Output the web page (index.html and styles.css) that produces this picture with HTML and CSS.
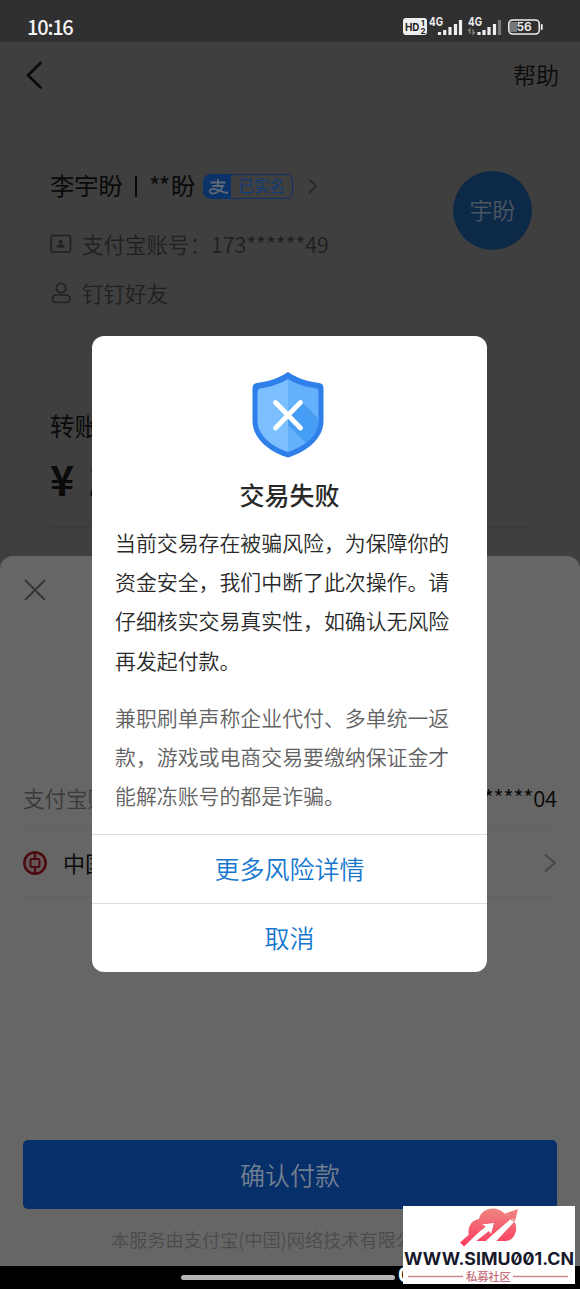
FILE: index.html
```html
<!DOCTYPE html>
<html lang="zh-CN">
<head>
<meta charset="utf-8">
<title>交易失败</title>
<link rel="stylesheet" href="styles.css">
</head>
<body>
<div class="screen">
  <header class="status">
    <span class="clock">10:16</span>
    <svg class="indicators" width="142" height="24" viewBox="0 0 142 24">
      <rect x="0" y="3" width="24" height="17" rx="3" fill="#eee"/>
      <g font-family="Inter, sans-serif" font-weight="700">
        <text x="2" y="15.500" font-size="11" textLength="14.500" lengthAdjust="spacingAndGlyphs" fill="#222">HD</text>
        <text x="18" y="10.800" font-size="8" fill="#222">1</text>
        <text x="17.500" y="18.800" font-size="8" fill="#222">2</text>
        <text x="26" y="11" font-size="12" textLength="14" lengthAdjust="spacingAndGlyphs" fill="#eee">4G</text>
        <text x="65" y="11" font-size="12" textLength="14" lengthAdjust="spacingAndGlyphs" fill="#eee">4G</text>
      </g>
      <g stroke="#eee" stroke-width="3.200">
        <path d="M36.500 20v-3M41.700 20v-5M47 20v-8M52.500 20v-11M57.500 20v-15"/>
        <path d="M76 20v-3M81 20v-5M86 20v-8M91.500 20v-11"/>
        <path d="M96.500 20v-15" stroke="#777"/>
      </g>
      <path d="M67 19v-5l-2 2M70 14v5l2-2" fill="none" stroke="#888" stroke-width="1.200"/>
      <rect x="107" y="7" width="7" height="10" fill="#777"/>
      <rect x="105.800" y="5" width="30.500" height="14" rx="4" fill="none" stroke="#eee" stroke-width="1.600"/>
      <path d="M138.800 10v4" stroke="#eee" stroke-width="1.800" stroke-linecap="round"/>
      <text x="121" y="16.300" text-anchor="middle" font-family="Inter, sans-serif" font-size="12" font-weight="600" fill="#eee">56</text>
    </svg>
  </header>

  <main class="transfer">
    <div class="titlebar">
      <svg width="20" height="30" viewBox="0 0 20 30"><path d="M14.500 3L2 15.300L14.500 27.500" fill="none" stroke="#090909" stroke-width="2.600" stroke-linecap="round"/></svg>
      <span>帮助</span>
    </div>
    <section class="payee">
      <div class="details">
        <div class="name">
          <span>李宇盼</span><i class="bar"></i><span class="stars">**</span><span>盼</span>
          <span class="verified">
            <svg width="27" height="23" viewBox="0 0 27 23"><path d="M6.500 7.500H21.500M14 4V11M8.500 11H19C17 16 11 19 8 18.500C4 17.500 5.500 13.500 10 14C15 14.700 18 17.500 24 18" fill="none" stroke="#5f6874" stroke-width="1.800"/></svg>
            <b>已实名</b>
          </span>
          <svg class="chevron" width="12" height="18" viewBox="0 0 12 18"><path d="M2 2L9 9L2 16" fill="none" stroke="#242424" stroke-width="1.500"/></svg>
        </div>
        <div class="meta account">
          <svg width="22" height="20" viewBox="0 0 22 20"><rect x="1" y="1.500" width="19.500" height="16.500" rx="2" fill="none" stroke="#202123" stroke-width="1.700"/><circle cx="10.700" cy="7.700" r="2" fill="#202123"/><path d="M6.500 13.500q.5-3.500 4.200-3.500t4.200 3.500z" fill="#202123"/></svg>
          <span>支付宝账号：<span class="number">173******49</span></span>
        </div>
        <div class="meta friend">
          <svg width="22" height="22" viewBox="0 0 22 22"><circle cx="11" cy="6" r="4.700" fill="none" stroke="#202123" stroke-width="1.700"/><rect x="2.500" y="13" width="17.500" height="7.500" rx="3.750" fill="none" stroke="#202123" stroke-width="1.700"/></svg>
          <span>钉钉好友</span>
        </div>
      </div>
      <div class="avatar">宇盼</div>
    </section>
    <section class="amount">
      <div class="amount-label">转账</div>
      <div class="amount-value">¥<span>1</span></div>
    </section>
  </main>

  <section class="sheet">
    <svg class="close" width="24" height="24" viewBox="0 0 24 24"><path d="M2 2L22 22M22 2L2 22" stroke="#343434" stroke-width="1.800"/></svg>
    <div class="row login"><span class="muted">支付宝账</span><span class="number">*****04</span></div>
    <div class="row bank">
      <svg width="26" height="26" viewBox="0 0 26 26"><g fill="none" stroke="#4a0a10"><circle cx="13" cy="13" r="10.700" fill="#66575a" stroke-width="2.500"/><rect x="8.500" y="9" width="9" height="8" rx="1.500" stroke-width="2"/><path d="M13 2V9M13 17V24" stroke-width="2.200"/></g></svg>
      <span class="bank-name">中国</span>
      <svg class="go" width="14" height="22" viewBox="0 0 14 22"><path d="M2 2.500L12 11L2 19.500" fill="none" stroke="#454545" stroke-width="1.800"/></svg>
    </div>
    <div class="pay">确认付款</div>
    <div class="legal">本服务由支付宝(中国)网络技术有限公</div>
  </section>

  <footer class="nav"><i class="handle"></i><b class="digit">0</b></footer>

  <section class="dialog">
    <svg class="shield" width="74" height="88" viewBox="0 0 74 88">
      <path d="M37 1C28 7 18 10.500 6 12Q1.500 12.500 1.500 17V50C1.500 68 19 81 37 86.500C55 81 72.500 68 72.500 50V17Q72.500 12.500 68 12C56 10.500 46 7 37 1Z" fill="#2f7fea"/>
      <path d="M37 8C29 13 19 16 9 17.500Q6.500 18 6.500 21V50C6.500 64 21 76 37 81Z" fill="#7cbfff"/>
      <path d="M37 8C45 13 55 16 65 17.500Q67.500 18 67.500 21V50C67.500 64 53 76 37 81Z" fill="#65b0fb"/>
      <path d="M51 31L67.500 48V50C67.500 58 62 66 54.500 71.500L37 54V44Z" fill="#459df4"/>
      <path d="M24.500 31.500L49.500 57M49.500 31.500L24.500 57" stroke="#fff" stroke-width="4.800" stroke-linecap="round"/>
    </svg>
    <h1>交易失败</h1>
    <p class="message">当前交易存在被骗风险，为保障你的<br>资金安全，我们中断了此次操作。请<br>仔细核实交易真实性，如确认无风险<br>再发起付款。</p>
    <p class="message hint">兼职刷单声称企业代付、多单统一返<br>款，游戏或电商交易要缴纳保证金才<br>能解冻账号的都是诈骗。</p>
    <div class="action">更多风险详情</div>
    <div class="action">取消</div>
  </section>

  <svg class="watermark" width="172" height="78" viewBox="0 0 172 78">
    <defs><linearGradient id="cloud" gradientUnits="userSpaceOnUse" x1="0" y1="2" x2="0" y2="40"><stop offset="0" stop-color="#ee8783"/><stop offset="1" stop-color="#fb3a60"/></linearGradient></defs>
    <rect width="172" height="78" fill="#fff"/>
    <path d="M66 30C64 22 68 14 76 13C78 1 95-1 102 8C112 12 116 21 111 30Q108 35 102 35H73Z" fill="url(#cloud)"/>
    <path d="M66 34L83 20.500L79 18.500L91 17L88 28L86 25L72 36L62 42Z" fill="#fff"/>
    <path d="M57 36.500L66 28.500L73 23L76 26L61 40.500Z" fill="url(#cloud)"/>
    <path d="M81 36.500L107 13L111 16L92 36.500Z" fill="#fff"/>
    <path d="M92 18L105 9L101 8L115 3L112 15L109 12L90 28Z" fill="url(#cloud)"/>
    <text x="1" y="59" textLength="170" lengthAdjust="spacingAndGlyphs" class="url">WWW.SIMU001.CN</text>
    <path d="M5 70.500H60M110 70.500H165" stroke="#cd8790" stroke-width="1.300"/>
    <text x="63" y="74.500" textLength="45" class="community">私募社区</text>
  </svg>
</div>
</body>
</html>
```

FILE: styles.css
```css
* { box-sizing: border-box; }
body { margin: 0; background: #000; }
.screen {
  position: relative;
  width: 580px;
  height: 1289px;
  overflow: hidden;
  background: #3f3f3f;
  font-family: "Noto Sans CJK SC", sans-serif;
  font-weight: 350;
  color: #0a0a0a;
  white-space: nowrap;
}
.status {
  display: flex;
  justify-content: space-between;
  align-items: center;
  height: 42px;
  padding: 12px 35px 0 27px;
  background: #303030;
}
.clock { font: 500 20px/24px "Noto Sans CJK SC", sans-serif; letter-spacing: -1.200px; color: #f4f4f4; }
.titlebar {
  display: flex;
  justify-content: space-between;
  align-items: center;
  height: 66px;
  padding: 0 21px 0 26px;
  font-size: 23px;
}
.titlebar span { padding-bottom: 2px; }
.payee {
  display: flex;
  justify-content: space-between;
  height: 292px;
  padding: 60px 48px 0 50px;
}
.name { display: flex; align-items: center; height: 36px; font-size: 24.300px; font-weight: 400; }
.name > span:not(.verified) { padding-bottom: 3px; }
.bar { width: 2px; height: 21px; margin: 0 12px; background: #0a0a0a; }
.stars { letter-spacing: -1.500px; width: 22px; }
.verified {
  display: flex;
  width: 90px;
  height: 25px;
  margin-left: 8px;
  border: 1.500px solid #0c3369;
  border-radius: 7px;
  overflow: hidden;
}
.verified svg { background: #0c3369; flex: none; }
.verified b { flex: 1; text-align: center; font-size: 15.500px; line-height: 20px; font-weight: 400; color: #0c3c7b; }
.chevron { margin-left: 14px; }
.meta { display: flex; align-items: center; gap: 10px; font-size: 21.500px; color: #202020; }
.meta > span { padding-bottom: 2px; }
.account .number { letter-spacing: -0.050px; }
.account { height: 30px; margin-top: 25px; }
.friend { height: 30px; margin-top: 19px; }
.avatar {
  width: 79px;
  height: 79px;
  margin-top: 3px;
  border-radius: 50%;
  background: #0d2948;
  color: #4b5661;
  font-size: 23px;
  line-height: 77px;
  text-align: center;
}
.amount { margin: 0 52px 0 50px; height: 128px; border-bottom: 1px solid #393939; }
.amount-label { padding-top: 9px; font-size: 24.500px; line-height: 34px; font-weight: 400; }
.amount-value { display: flex; gap: 13px; font-size: 41px; line-height: 71px; font-weight: 700; }
.sheet {
  position: absolute;
  top: 556px;
  left: 0;
  width: 580px;
  height: 710px;
  padding: 22px 23px 0;
  border-radius: 13px 13px 0 0;
  background: #666;
}
.close { display: block; }
.row { display: flex; align-items: center; border-bottom: 1px solid #616161; }
.row span { padding-bottom: 2px; }
.login { justify-content: space-between; height: 65px; margin-top: 164px; font-size: 21.500px; }
.login .number { font-size: 22px; letter-spacing: -0.200px; }
.muted { color: #393939; }
.bank { height: 66px; font-size: 22px; }
.bank svg { margin-bottom: 2px; }
.bank svg:first-child { margin-left: -1px; }
.bank .bank-name { margin-left: 15px; padding-bottom: 4px; font-weight: 400; }
.go { margin-left: auto; }
.pay {
  height: 69px;
  margin-top: 243px;
  border-radius: 5px;
  background: #072f69;
  color: #727f90;
  font-size: 25px;
  line-height: 68px;
  text-align: center;
}
.legal { margin: 16px 0 0 88px; font-size: 18.200px; line-height: 28px; color: #4b4b4b; }
.nav {
  position: absolute;
  top: 1266px;
  left: 0;
  display: flex;
  width: 580px;
  height: 23px;
  padding-left: 181px;
  background: #000;
}
.handle { width: 214px; height: 5px; margin-top: 9px; border-radius: 3px; background: #b5b5b5; }
.digit { margin-left: 3px; font: 700 20px/18px Inter, sans-serif; color: #fff; }
.dialog {
  position: absolute;
  top: 336px;
  left: 92px;
  width: 395px;
  height: 636px;
  border-radius: 12px;
  background: #fff;
  overflow: hidden;
}
.shield { display: block; margin: 35px auto 0 159px; }
.dialog h1 { margin: 17px 0 0; font-size: 25px; line-height: 36px; font-weight: 500; text-align: center; color: #292929; }
.message { margin: 11px 0 0 23px; font-size: 20.900px; line-height: 39.200px; color: #292929; }
.hint { margin-top: 18px; color: #626262; }
.action {
  height: 69px;
  border-top: 1px solid #dedede;
  color: #1677cf;
  font-size: 25px;
  line-height: 67px;
  text-align: center;
}
.hint + .action { margin-top: 19px; }
.watermark { position: absolute; top: 1206px; left: 403px; }
.url { font: 700 17px Inter, sans-serif; font-feature-settings: "zero"; fill: #17182b; }
.community { font: 500 11.500px "Noto Sans CJK SC", sans-serif; fill: #c66f7b; }
```
